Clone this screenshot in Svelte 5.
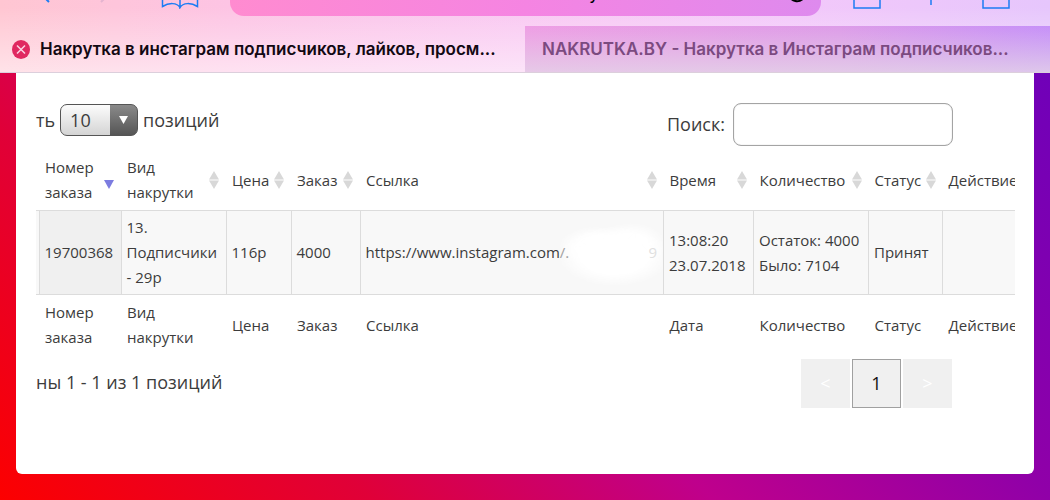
<script lang="ts">
  type Column = { head: string; foot: string; cls: string; sort: 'none' | 'both' | 'desc' };

  const columns: Column[] = [
    { head: 'Номер заказа', foot: 'Номер заказа', cls: 'c-id', sort: 'desc' },
    { head: 'Вид накрутки', foot: 'Вид накрутки', cls: 'c-kind', sort: 'both' },
    { head: 'Цена', foot: 'Цена', cls: 'c-price', sort: 'both' },
    { head: 'Заказ', foot: 'Заказ', cls: 'c-amount', sort: 'both' },
    { head: 'Ссылка', foot: 'Ссылка', cls: 'c-link', sort: 'both' },
    { head: 'Время', foot: 'Дата', cls: 'c-time', sort: 'both' },
    { head: 'Количество', foot: 'Количество', cls: 'c-count', sort: 'both' },
    { head: 'Статус', foot: 'Статус', cls: 'c-status', sort: 'both' },
    { head: 'Действие', foot: 'Действие', cls: 'c-action', sort: 'none' },
  ];

  let pageSize = $state('10');
  let query = $state('');
</script>

<div class="browser">
  <div class="toolbar">
    <button class="tool back" aria-label="Назад">
      <svg width="14" height="24" viewBox="0 0 14 24"><path d="M12 2 2 12l10 10" /></svg>
    </button>
    <button class="tool forward" aria-label="Вперёд">
      <svg width="14" height="24" viewBox="0 0 14 24"><path d="m2 2 10 10L2 22" /></svg>
    </button>
    <button class="tool book" aria-label="Закладки">
      <svg width="38" height="30" viewBox="0 0 38 30">
        <path d="M19 28.500C16 23.500 8 23.500 1.500 27.500V4C8 0 16 0 19 5c3-5 11-5 17.500-1v23.500C30 23.500 22 23.500 19 28.500V5" />
      </svg>
    </button>
    <div class="address">
      <span class="host">nakrutka.by</span>
      <button class="reload" aria-label="Обновить">
        <svg width="20" height="20" viewBox="0 0 20 20"><path d="M18 10a8 8 0 1 1-3-6" /></svg>
      </button>
    </div>
    <button class="tool share" aria-label="Поделиться">
      <svg width="28" height="28" viewBox="0 0 28 28"><path d="M8 5H1v22h26V5h-7" /></svg>
    </button>
    <button class="tool plus" aria-label="Новая вкладка">
      <svg width="26" height="26" viewBox="0 0 26 26"><path d="M13 0v26M0 13h26" /></svg>
    </button>
    <button class="tool pages" aria-label="Вкладки">
      <svg width="28" height="28" viewBox="0 0 28 28"><path d="M1 1h26v26H1z" /></svg>
    </button>
  </div>

  <div class="tabs">
    <div class="tab active">
      <button class="close" aria-label="Закрыть вкладку">
        <svg width="18" height="19" viewBox="0 0 18 19">
          <ellipse cx="9" cy="9.500" rx="9" ry="9.500" />
          <path d="m5 5.500 8 8m0-8-8 8" />
        </svg>
      </button>
      <span class="title">Накрутка в инстаграм подписчиков, лайков, просм...</span>
    </div>
    <div class="tab">
      <span class="title">NAKRUTKA.BY - Накрутка в Инстаграм подписчиков...</span>
    </div>
  </div>
</div>

<main class="card">
  <div class="controls">
    <div class="length">
      <label for="page-size">ть</label>
      <span class="select">
        <select id="page-size" bind:value={pageSize}>
          <option>10</option>
          <option>25</option>
          <option>50</option>
        </select>
        <svg width="9" height="8" viewBox="0 0 9 8"><path d="M0 0h9L4.500 8z" /></svg>
      </span>
      <span>позиций</span>
    </div>
    <div class="search">
      <label for="search">Поиск:</label>
      <input id="search" type="search" bind:value={query} />
    </div>
  </div>

  <div class="scroller">
    <table>
      <colgroup>
        <col class="c-edge" />
        {#each columns as col}
          <col class={col.cls} />
        {/each}
      </colgroup>
      <thead>
        <tr>
          <td class="edge"></td>
          {#each columns as col}
            <th>
              <div class="head">
                <span>{col.head}</span>
                {#if col.sort === 'both'}
                  <svg width="10" height="18" viewBox="0 0 10 18"><path d="M5 0l5 8.500H0zM0 9.500h10L5 18z" /></svg>
                {:else if col.sort === 'desc'}
                  <svg class="desc" width="10" height="18" viewBox="0 0 10 18"><path d="M0 9h10l-5 9z" /></svg>
                {/if}
              </div>
            </th>
          {/each}
        </tr>
      </thead>
      <tbody>
        <tr>
          <td class="edge"></td>
          <td class="sorted">19700368</td>
          <td>13. Подписчики - 29р</td>
          <td>116р</td>
          <td>4000</td>
          <td class="link">
            <div class="url"><span>https://www.instagram.com<i>/.</i></span><i class="tail">9</i></div>
          </td>
          <td>13:08:20 23.07.2018</td>
          <td>Остаток: 4000<br />Было: 7104</td>
          <td>Принят</td>
          <td></td>
        </tr>
      </tbody>
      <tfoot>
        <tr>
          <td class="edge"></td>
          {#each columns as col}
            <th>{col.foot}</th>
          {/each}
        </tr>
      </tfoot>
    </table>
  </div>

  <div class="bottom">
    <span class="info">ны 1 - 1 из 1 позиций</span>
    <nav class="pager" aria-label="Страницы">
      <button disabled>&lt;</button>
      <button class="current">1</button>
      <button disabled>&gt;</button>
    </nav>
  </div>
</main>

<style>
  :global(body) {
    min-height: 100vh;
    background: linear-gradient(45deg, #fc0000 0%, #e00038 24%, #bf008c 46%, #9000a8 68%, #7000b8 95%);
    font-family: "Open Sans", "Noto Sans", sans-serif;
    color: #3c3c3c;
  }

  button {
    padding: 0;
    border: 0;
    background: none;
    font: inherit;
    color: inherit;
  }

  svg { display: block; }

  .browser {
    background:
      linear-gradient(to bottom, transparent 10%, rgb(255 255 255 / 0.5)),
      linear-gradient(to right, #ffc6d2, #fdc4e4 22%, #f9c8f2 50%, #f3c8fa 75%, #e6c6fc);
    border-bottom: 1px solid #dccfdc;
    font-family: Inter, sans-serif;
    font-optical-sizing: none;
  }

  .toolbar {
    display: flex;
    align-items: flex-end;
    height: 26px;
    padding: 0 40px 0 37px;
    overflow: hidden;
  }

  .tool svg {
    fill: none;
    stroke: #1c7cf4;
    stroke-width: 1.5;
  }

  .back, .forward { margin-bottom: 22px; }
  .back svg, .forward svg { stroke-width: 2; }
  .forward { margin-left: 48px; }
  .forward svg { stroke: #e4b4d0; }
  .book { margin: 0 31px 17px 48px; }

  .address {
    flex: 1;
    display: flex;
    align-items: flex-start;
    justify-content: flex-end;
    height: 44px;
    margin-bottom: 10px;
    padding-right: 14px;
    box-sizing: border-box;
    border-radius: 14px;
    background: linear-gradient(to right, #ff8bd0, #f584e2 50%, #de8aee);
    color: #000;
  }

  .host {
    margin-right: 188px;
    font-size: 18px;
    line-height: 22px;
    padding-top: 10px;
  }

  .reload { margin-top: 11px; }
  .reload svg { fill: none; stroke: #000; stroke-width: 2; }

  .share { margin: 0 37px 17px 32px; }
  .plus { margin: 0 38px 21px 0; }
  .pages { margin-bottom: 17px; }

  .tabs { display: flex; }

  .tab {
    width: 50%;
    display: flex;
    align-items: center;
    height: 46px;
    padding-left: 17px;
    box-sizing: border-box;
    background:
      linear-gradient(to bottom, transparent, rgb(228 212 232 / 0.8)),
      linear-gradient(to right, #ee9ee4, #dd9ce8 60%, #c690f8);
    color: #7b4a80;
    font-size: 17px;
    font-weight: 600;
    white-space: nowrap;
  }

  .tab.active {
    padding-left: 12px;
    gap: 10px;
    background: none;
    color: #120812;
  }

  .close ellipse { fill: #e02860; }
  .close path { fill: none; stroke: #fbd4e4; stroke-width: 1.5; }

  .card {
    margin: 0 16px 26px;
    padding: 30px 19px 66px 20px;
    border-radius: 0 0 6px 6px;
    background: #fff;
    font-size: 18px;
    line-height: 25px;
  }

  .controls {
    display: flex;
    justify-content: space-between;
    align-items: flex-start;
    margin-right: 62px;
  }

  .length, .search { display: flex; align-items: center; }
  .length { gap: 5px; padding-top: 1px; }
  .search { gap: 8px; }

  .select { display: grid; align-items: center; }

  .select select, .select svg { grid-area: 1 / 1; }

  .select svg {
    justify-self: end;
    margin-right: 10px;
    fill: #fff;
    pointer-events: none;
  }

  select {
    width: 78px;
    height: 32px;
    padding: 0 32px 0 9px;
    border: 1px solid #555;
    border-radius: 7px;
    appearance: none;
    background:
      linear-gradient(to bottom, #8a8a8a, #555) right / 27px 100% no-repeat,
      linear-gradient(to bottom, #fcfcfc, #d4d4d4);
    font: inherit;
    color: #3c3c3c;
  }

  .search input {
    width: 220px;
    height: 43px;
    padding: 0 10px;
    box-sizing: border-box;
    border: 1px solid #a4a4a4;
    border-radius: 8px;
    box-shadow: inset 0 0 1px #b0b0b0;
    background: #fff;
    font: inherit;
  }

  .scroller {
    margin-top: 4px;
    overflow: hidden;
  }

  table {
    width: calc(100% + 30px);
    table-layout: fixed;
    border-collapse: collapse;
    font-size: 15px;
  }

  .c-edge { width: 3px; }
  .c-id { width: 82px; }
  .c-kind { width: 105px; }
  .c-price { width: 65px; }
  .c-amount { width: 69px; }
  .c-time { width: 90px; }
  .c-count { width: 115px; }
  .c-status { width: 74px; }
  .c-action { width: 102px; }

  th, td {
    padding: 5px 0 5px 6px;
    font-weight: 400;
    text-align: left;
    vertical-align: middle;
  }

  .edge { padding: 0; }

  .head {
    display: flex;
    align-items: center;
    justify-content: space-between;
    padding-right: 7px;
  }

  .head svg { flex: none; fill: #d8d8d8; }
  .head .desc { fill: #7c7ce0; }

  tbody td {
    padding: 4px 0 4px 5px;
    border: 1px solid #dcdcdc;
    background: #f8f8f8;
  }

  tbody .edge { border-left: 0; }
  tbody .sorted { background: #f0f0f0; }

  tbody .link {
    background:
      radial-gradient(ellipse 56px 30px at 254px 54%, #fff 60%, transparent),
      radial-gradient(ellipse 38px 20px at 236px 42%, #fff 50%, transparent),
      radial-gradient(ellipse 36px 22px at 270px 40%, #fff 50%, transparent),
      #f8f8f8;
  }

  .url { display: flex; justify-content: space-between; padding-right: 6px; }
  .url i { font-style: normal; color: #a0a0a0; }
  .url .tail { color: #e0e0e0; }

  tfoot th { padding-right: 6px; }
  tfoot th:last-child { padding-right: 0; }

  .bottom {
    display: flex;
    justify-content: space-between;
    align-items: flex-start;
    margin: 4px 63px 0 0;
  }

  .info { padding-top: 11px; }

  .pager { display: flex; gap: 2px; }

  .pager button {
    width: 49px;
    height: 49px;
    background: #f0f0f0;
    color: #fff;
  }

  .pager .current {
    border: 1px solid #a0a0a0;
    color: #111;
  }
</style>
